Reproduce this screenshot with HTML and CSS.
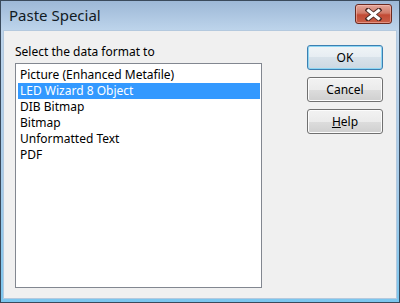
FILE: index.html
```html
<!DOCTYPE html>
<html lang="en">
<head>
    <meta charset="UTF-8">
    <title>Paste Special</title>
    <link rel="stylesheet" href="styles.css">
</head>
<body>
    <div class="window">
        <div class="titlebar">
            <span class="title">Paste Special</span>
            <div class="close-btn">
                <svg width="17" height="13" viewBox="0 0 17 13">
                    <path d="M3 2 L14 11 M14 2 L3 11" stroke="#4a2a25" stroke-width="4.8" stroke-linecap="square"/>
                    <path d="M3.5 2.5 L13.5 10.5 M13.5 2.5 L3.5 10.5" stroke="#fff" stroke-width="3" stroke-linecap="square"/>
                </svg>
            </div>
        </div>
        <div class="client">
            <div class="left">
                <div class="label">Select the data format to</div>
                <div class="listbox">
                    <div class="item">Picture (Enhanced Metafile)</div>
                    <div class="item selected">LED Wizard 8 Object</div>
                    <div class="item">DIB Bitmap</div>
                    <div class="item">Bitmap</div>
                    <div class="item">Unformatted Text</div>
                    <div class="item">PDF</div>
                </div>
            </div>
            <div class="buttons">
                <div class="btn default">OK</div>
                <div class="btn">Cancel</div>
                <div class="btn"><u>H</u>elp</div>
            </div>
        </div>
    </div>
</body>
</html>
```

FILE: styles.css
```css
body {
    margin: 0;
    font-family: "Noto Sans", "Open Sans", sans-serif;
    font-size: 12px;
    color: #000;
    background: #fff;
}
.window {
    width: 400px;
    height: 303px;
    box-sizing: border-box;
    border: 1px solid #3a4a5c;
    background: linear-gradient(#9db8d7 0, #bdd4eb 29px, #a6cbe9 60%, #7cc6ee 100%);
    display: flex;
    flex-direction: column;
    padding: 0 2px 3px 2px;
}
.titlebar {
    height: 29px;
    display: flex;
    align-items: center;
    justify-content: space-between;
    padding: 0 5px 0 6px;
}
.title {
    font-size: 15px;
    color: #111a24;
    margin-top: -2px;
}
.close-btn {
    width: 37px;
    height: 20px;
    box-sizing: border-box;
    border: 1px solid #6b2a20;
    border-radius: 3px;
    background: linear-gradient(#e3a79b, #d07a68 45%, #c24a34 55%, #c8604a);
    box-shadow: inset 0 0 0 1px rgba(255, 200, 190, 0.5);
    display: flex;
    align-items: center;
    justify-content: center;
    margin-top: -3px;
}
.client {
    flex: 1;
    background: #f0f0f0;
    border: 1px solid #b4c9de;
    display: flex;
    padding: 13px 0 0 11px;
}
.left {
    width: 247px;
}
.label {
    height: 19px;
    line-height: 16px;
}
.listbox {
    height: 225px;
    box-sizing: border-box;
    border: 1px solid #828790;
    background: #fff;
    padding: 3px 1px 0 2px;
}
.item {
    height: 16px;
    line-height: 16px;
    padding-left: 2px;
}
.item.selected {
    background: #3399ff;
    color: #fff;
}
.buttons {
    margin-left: 45px;
    display: flex;
    flex-direction: column;
    gap: 7px;
    margin-top: 1px;
}
.btn {
    width: 76px;
    height: 25px;
    box-sizing: border-box;
    border: 1px solid #707070;
    border-radius: 3px;
    background: linear-gradient(#f2f2f2, #ebebeb 50%, #dddddd 50%, #cfcfcf);
    box-shadow: inset 0 0 0 1px #fcfcfc;
    display: flex;
    align-items: center;
    justify-content: center;
}
.btn.default {
    border-color: #3c7fb1;
    box-shadow: inset 0 0 0 1px #8ed6f3;
    background: linear-gradient(#f0f4f7, #e6edf2 50%, #d8e2ea 50%, #ccd8e2);
}
u {
    text-decoration: underline;
    text-underline-offset: 1px;
}
```
